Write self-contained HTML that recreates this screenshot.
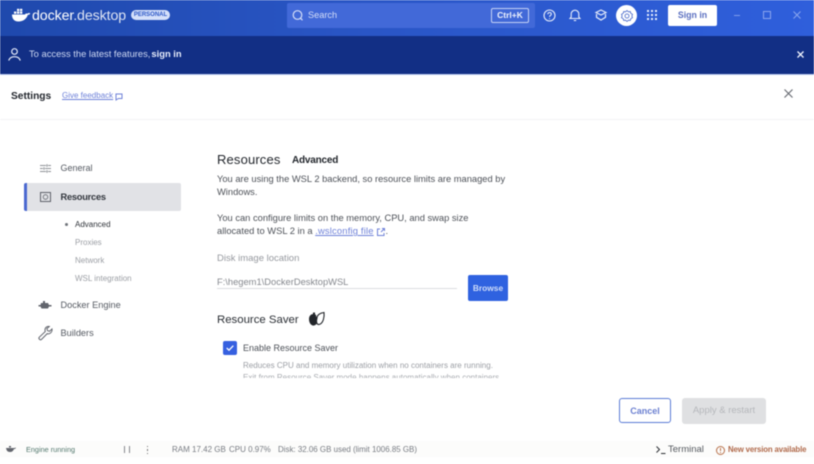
<!DOCTYPE html>
<html><head><meta charset="utf-8">
<style>
html,body{margin:0;padding:0;width:814px;height:464px;overflow:hidden;background:#fff;font-family:"Liberation Sans",sans-serif;color:#33383f}
.t{position:absolute;white-space:nowrap;line-height:1}
svg{position:absolute;overflow:visible}
#page{position:relative;width:814px;height:464px;filter:blur(.5px)}
</style></head><body><div id="page">
<div style="position:absolute;left:0;top:0;width:814px;height:36px;background:linear-gradient(90deg,#1f49ad 0,#2a56c6 45%,#2f5fdc 100%)"></div>
<div style="position:absolute;left:0;top:36px;width:814px;height:38px;background:#122f85"></div>
<div style="position:absolute;left:0;top:74px;width:814px;height:1px;background:#b9c8ee"></div>

<!-- logo -->
<svg style="left:11px;top:8px" width="20" height="14" viewBox="0 0 20 14"><path d="M1 6.500h13c.5-1 1.500-1.200 2.500-.8.8-.9 2-.8 2.800-.3-.5 1-1.200 1.500-2.500 1.500C15.500 11 12 13.500 7.500 13.500 3 13.500 1 10.500 1 6.500z" fill="#fff"/><rect x="3" y="3.500" width="2.300" height="2.300" fill="#fff"/><rect x="6" y="3.500" width="2.300" height="2.300" fill="#fff"/><rect x="9" y="3.500" width="2.300" height="2.300" fill="#fff"/><rect x="6" y=".8" width="2.300" height="2.300" fill="#fff"/><rect x="9" y=".8" width="2.300" height="2.300" fill="#fff"/></svg>
<div class="t" style="left:32px;top:9px;font-size:14.200px;color:#fff;letter-spacing:-.1px">docker<span style="opacity:.85">.desktop</span></div>
<div class="t" style="left:131px;top:10px;width:39px;height:10px;background:#d5e0fa;border-radius:5px;color:#2a56c6;font-size:6px;line-height:10px;text-align:center;font-weight:bold">PERSONAL</div>

<!-- search -->
<div style="position:absolute;left:287px;top:3px;width:248px;height:25px;background:#4269d8;border-radius:2px"></div>
<svg style="left:292px;top:10px" width="13" height="11" viewBox="0 0 13 11" fill="none" stroke="#d5def8" stroke-width="1.200"><circle cx="5.500" cy="5" r="4.300"/><path d="M8.500 8.200l2 2"/></svg>
<div class="t" style="left:308px;top:10.500px;font-size:9.200px;color:#d5def8">Search</div>
<div class="t" style="left:491px;top:8px;width:36px;height:13px;border:1px solid #c4d1f5;border-radius:2px;color:#eef2fd;font-size:8.500px;font-weight:bold;line-height:13px;text-align:center">Ctrl+K</div>

<!-- top icons -->
<svg style="left:543px;top:9px" width="13" height="13" viewBox="0 0 13 13" fill="none" stroke="#e8eefc" stroke-width="1.100"><circle cx="6.500" cy="6.500" r="5.500"/><path d="M4.800 5.200c0-2.300 3.500-2.200 3.500 0 0 1.300-1.800 1.300-1.800 2.700"/><path d="M6.500 9.300v.8"/></svg>
<svg style="left:569px;top:9px" width="12" height="13" viewBox="0 0 12 13" fill="none" stroke="#e8eefc" stroke-width="1.100"><path d="M1 9.500h10L9.800 8V5a3.800 3.800 0 0 0-7.600 0v3z"/><path d="M4.800 11.500h2.400"/></svg>
<svg style="left:595px;top:9px" width="12" height="12" viewBox="0 0 12 12" fill="none" stroke="#e8eefc" stroke-width="1.200"><path d="M6 1L1 3.500 6 6l5-2.500z"/><path d="M1.500 5v3.300L6 11l4.500-2.700V5"/></svg>
<div style="position:absolute;left:616px;top:5px;width:21px;height:21px;background:#fff;border-radius:50%"></div>
<svg style="left:620.500px;top:9.500px" width="12" height="12" viewBox="0 0 12 12" fill="none" stroke="#3f62c8" stroke-width=".8"><path d="M6 .5l1.400 1.300 1.900-.2.500 1.800 1.700.9-.6 1.700.6 1.700-1.700.9-.5 1.800-1.900-.2L6 11.500 4.600 10.200l-1.900.2-.5-1.800-1.700-.9.600-1.700-.6-1.700 1.700-.9.500-1.800 1.900.2z"/><circle cx="6" cy="6" r="2"/></svg>
<svg style="left:647px;top:10px" width="11" height="11" viewBox="0 0 11 11" fill="#e8eefc"><rect x="0" y="0" width="2" height="2"/><rect x="4" y="0" width="2" height="2"/><rect x="8" y="0" width="2" height="2"/><rect x="0" y="4" width="2" height="2"/><rect x="4" y="4" width="2" height="2"/><rect x="8" y="4" width="2" height="2"/><rect x="0" y="8" width="2" height="2"/><rect x="4" y="8" width="2" height="2"/><rect x="8" y="8" width="2" height="2"/></svg>
<div class="t" style="left:668px;top:5px;width:49px;height:21px;background:#fff;border-radius:2px;color:#5a6fc0;font-size:8.800px;font-weight:bold;line-height:20px;text-align:center">Sign in</div>
<div style="position:absolute;left:734px;top:15px;width:6px;height:1px;background:#7f9ceb"></div>
<div style="position:absolute;left:763px;top:11px;width:6px;height:6px;border:1px solid #8aa5ee"></div>
<svg style="left:793px;top:11px" width="8" height="8" viewBox="0 0 8 8" stroke="#8aa5ee" stroke-width="1"><path d="M.5.500l7 7M7.500.500l-7 7"/></svg>

<!-- banner -->
<svg style="left:8px;top:48px" width="13" height="13" viewBox="0 0 13 13" fill="none" stroke="#e4eafa" stroke-width="1.200"><circle cx="6.500" cy="3.500" r="2.800"/><path d="M.7 12.500c1-3 3-3.800 5.800-3.800s4.800.8 5.800 3.800"/></svg>
<div class="t" style="left:29px;top:49px;font-size:9.400px;color:#cdd8f3">To access the latest features,<b style="color:#e8eefc;margin-left:1px">sign in</b></div>
<svg style="left:797px;top:51px" width="7" height="7" viewBox="0 0 7 7" stroke="#eef2fd" stroke-width="1.300"><path d="M.5.500l6 6M6.500.500l-6 6"/></svg>

<!-- settings header -->
<div class="t" style="left:11px;top:91.500px;font-size:10.200px;font-weight:bold;color:#23272e">Settings</div>
<div class="t" style="left:62px;top:92px;font-size:8px;color:#6d80d8;text-decoration:underline">Give feedback</div>
<svg style="left:115px;top:92.500px" width="8" height="8" viewBox="0 0 8 8" fill="none" stroke="#6d80d8"><path d="M1 1h6v4.500H3.500L1 7z"/></svg>
<svg style="left:784px;top:89px" width="9" height="9" viewBox="0 0 9 9" stroke="#6a6e75" stroke-width="1.200"><path d="M.5.500l8 8M8.500.500l-8 8"/></svg>
<div style="position:absolute;left:0;top:119px;width:814px;height:1px;background:#f4f4f6"></div>

<!-- sidebar -->
<svg style="left:40px;top:164px" width="11" height="9" viewBox="0 0 11 9" stroke="#6a6e75" stroke-width=".8" fill="none"><path d="M0 1.500h6M8 1.500h3M7 .3v2.400M0 4.500h3M5 4.500h6M4 3.300v2.400M0 7.500h6M8 7.500h3M7 6.300v2.400"/></svg>
<div class="t" style="left:60.500px;top:164px;font-size:9px;color:#555a62">General</div>
<div style="position:absolute;left:24px;top:183px;width:157px;height:28px;background:#e1e2e6;border-radius:2px"></div>
<div style="position:absolute;left:24px;top:183px;width:3px;height:28px;background:#4a68d0;border-radius:2px 0 0 2px"></div>
<svg style="left:40px;top:192px" width="11" height="10" viewBox="0 0 11 10" fill="none" stroke="#5e626a" stroke-width="1"><rect x=".5" y=".5" width="10" height="9"/><circle cx="5.500" cy="5" r="2.300" stroke-width=".8"/></svg>
<div class="t" style="left:60.500px;top:192.500px;font-size:9.300px;color:#33373e;font-weight:bold;letter-spacing:-.25px">Resources</div>
<div style="position:absolute;left:65px;top:222.500px;width:3px;height:3px;background:#70747b;border-radius:50%"></div>
<div class="t" style="left:75px;top:220.500px;font-size:8px;color:#30343a">Advanced</div>
<div class="t" style="left:75px;top:238.500px;font-size:8px;color:#9b9ea4">Proxies</div>
<div class="t" style="left:75px;top:256.500px;font-size:8px;color:#9b9ea4">Network</div>
<div class="t" style="left:75px;top:274.500px;font-size:8px;color:#9b9ea4">WSL integration</div>
<svg style="left:38px;top:300px" width="14" height="11" viewBox="0 0 14 11" fill="#62656d"><path d="M3 3h7l1 2h2.500v1.500H11L10 8.500H3.500L2.500 6.500H.5V5h2z"/><rect x="5" y="1" width="2" height="2"/></svg>
<div class="t" style="left:60.500px;top:300.500px;font-size:9.200px;color:#555a62">Docker Engine</div>
<svg style="left:38px;top:326px" width="15" height="15" viewBox="0 0 15 15" fill="none" stroke="#62656d" stroke-width="1"><path d="M14 3l-2.500 2.300-2-.7-.6-2L11.300.500C9 0 7 1.500 7 4c0 .6.100 1 .3 1.500L1.200 11.300c-1 1.300.9 3.200 2.200 2.200L9.200 7.600c2.600 1 5.300-1.600 4.800-4.600z"/></svg>
<div class="t" style="left:60.500px;top:329px;font-size:9.200px;color:#555a62">Builders</div>

<!-- main -->
<div class="t" style="left:217px;top:153px;font-size:13px;color:#22262c;letter-spacing:.15px">Resources</div>
<div class="t" style="left:292px;top:155.500px;font-size:10px;color:#22262c;font-weight:bold;letter-spacing:-.2px">Advanced</div>
<div class="t" style="left:217px;top:175px;font-size:9.340px;color:#4d5158">You are using the WSL 2 backend, so resource limits are managed by</div>
<div class="t" style="left:217px;top:188px;font-size:9.340px;color:#4d5158">Windows.</div>
<div class="t" style="left:217px;top:214px;font-size:9.340px;color:#4d5158">You can configure limits on the memory, CPU, and swap size</div>
<div class="t" style="left:217px;top:227px;font-size:9.340px;color:#4d5158">allocated to WSL 2 in a <span style="color:#6d80d8;text-decoration:underline;letter-spacing:.2px"> .wslconfig file</span></div>
<svg style="left:376.500px;top:227.500px" width="8" height="8" viewBox="0 0 8 8" fill="none" stroke="#6d80d8"><path d="M3 1H.5v6.500H7V5M4 4l3.500-3.500M5 .5h2.500V3"/></svg>
<div class="t" style="left:385.500px;top:227px;font-size:9.340px;color:#4d5158">.</div>
<div class="t" style="left:217px;top:254px;font-size:9.500px;color:#96999f">Disk image location</div>
<div class="t" style="left:217px;top:278px;font-size:9.350px;color:#85888e">F:\hegem1\DockerDesktopWSL</div>
<div style="position:absolute;left:217px;top:287.500px;width:240px;height:1px;background:#dcdde0"></div>
<div class="t" style="left:468px;top:275px;width:40px;height:26px;background:#2f62e0;border-radius:2px;color:#cfdcf9;font-size:8.400px;font-weight:bold;line-height:26px;text-align:center">Browse</div>
<div class="t" style="left:217px;top:314.500px;font-size:11.400px;color:#2a2e34">Resource Saver</div>
<svg style="left:308px;top:312px" width="17" height="14" viewBox="0 0 17 14"><path d="M8 3C6 1 1 2 1 7s3 7 5 6.500S9 12 9 8z" fill="#22252a"/><path d="M9 6c0-3 3-5 7-5.500 .5 4-.5 11-5 12-2.500.3-3-3-2-6.500z" fill="#fff" stroke="#22252a" stroke-width="1.100"/><rect x="5" y=".5" width="2" height="2" fill="#22252a"/></svg>
<div style="position:absolute;left:223px;top:341px;width:14px;height:14px;background:#3660e0;border-radius:2px"></div>
<svg style="left:226px;top:345px" width="8" height="6" viewBox="0 0 8 6" fill="none" stroke="#fff" stroke-width="1.300"><path d="M.7 3l2.300 2.200L7.300.7"/></svg>
<div class="t" style="left:243px;top:343.500px;font-size:9px;color:#4d5158">Enable Resource Saver</div>
<div class="t" style="left:243px;top:362px;font-size:8.020px;color:#9b9ea4">Reduces CPU and memory utilization when no containers are running.</div>
<div style="position:absolute;left:243px;top:372px;width:270px;height:6px;overflow:hidden"><div class="t" style="left:0;top:2px;font-size:8.020px;color:#a8abb0">Exit from Resource Saver mode happens automatically when containers</div></div>

<!-- footer buttons -->
<div style="position:absolute;left:619px;top:398px;width:50px;height:23px;border:1.500px solid #5b7cd6;border-radius:3px;color:#6a7fd0;font-size:9px;font-weight:bold;line-height:24px;text-align:center">Cancel</div>
<div style="position:absolute;left:682px;top:398px;width:84px;height:26px;background:#dfe0e2;border-radius:3px;color:#b5b7bb;font-size:9.500px;line-height:26px;text-align:center">Apply &amp; restart</div>

<!-- status bar -->
<div style="position:absolute;left:0;top:441px;width:814px;height:16px;background:#fcfcfb"></div>
<div style="position:absolute;left:0;top:457px;width:814px;height:7px;background:#fff"></div>
<svg style="left:6px;top:445px" width="10" height="8" viewBox="0 0 10 8" fill="#62656d"><path d="M0 3h8.500L10 2.500C9.500 4 9 4 8 4 7 6.500 5.500 7 4 7 1.500 7 .5 5.500 0 3z"/><rect x="3" y="1" width="2" height="1.500"/></svg>
<div class="t" style="left:26px;top:446px;font-size:7.300px;color:#54796f">Engine running</div>
<div style="position:absolute;left:124px;top:446px;width:1px;height:7px;background:#85888e"></div>
<div style="position:absolute;left:129px;top:446px;width:1px;height:7px;background:#85888e"></div>
<div style="position:absolute;left:146.500px;top:445.500px;width:1.500px;height:1.500px;background:#777"></div>
<div style="position:absolute;left:146.500px;top:449px;width:1.500px;height:1.500px;background:#777"></div>
<div style="position:absolute;left:146.500px;top:452.500px;width:1.500px;height:1.500px;background:#777"></div>
<div class="t" style="left:172px;top:445.500px;font-size:8px;color:#777b82">RAM 17.42 GB</div>
<div class="t" style="left:229px;top:445.500px;font-size:8px;color:#777b82">CPU 0.97%</div>
<div class="t" style="left:278px;top:445.500px;font-size:7.950px;color:#777b82">Disk: 32.06 GB used (limit 1006.85 GB)</div>
<svg style="left:656px;top:446px" width="10" height="8" viewBox="0 0 10 8" fill="none" stroke="#2b2e33" stroke-width="1"><path d="M.5.500L3.500 3.500.5 6.500M5 7.500h4.500"/></svg>
<div class="t" style="left:668px;top:445px;font-size:9.500px;color:#55595f">Terminal</div>
<svg style="left:716px;top:445.500px" width="9" height="9" viewBox="0 0 9 9" fill="none" stroke="#b8714a"><circle cx="4.500" cy="4.500" r="4"/><path d="M4.500 2v3M4.500 6v1"/></svg>
<div class="t" style="left:728px;top:446px;font-size:7.800px;color:#b0694a;font-weight:bold;letter-spacing:-.13px">New version available</div>
</div></body></html>
